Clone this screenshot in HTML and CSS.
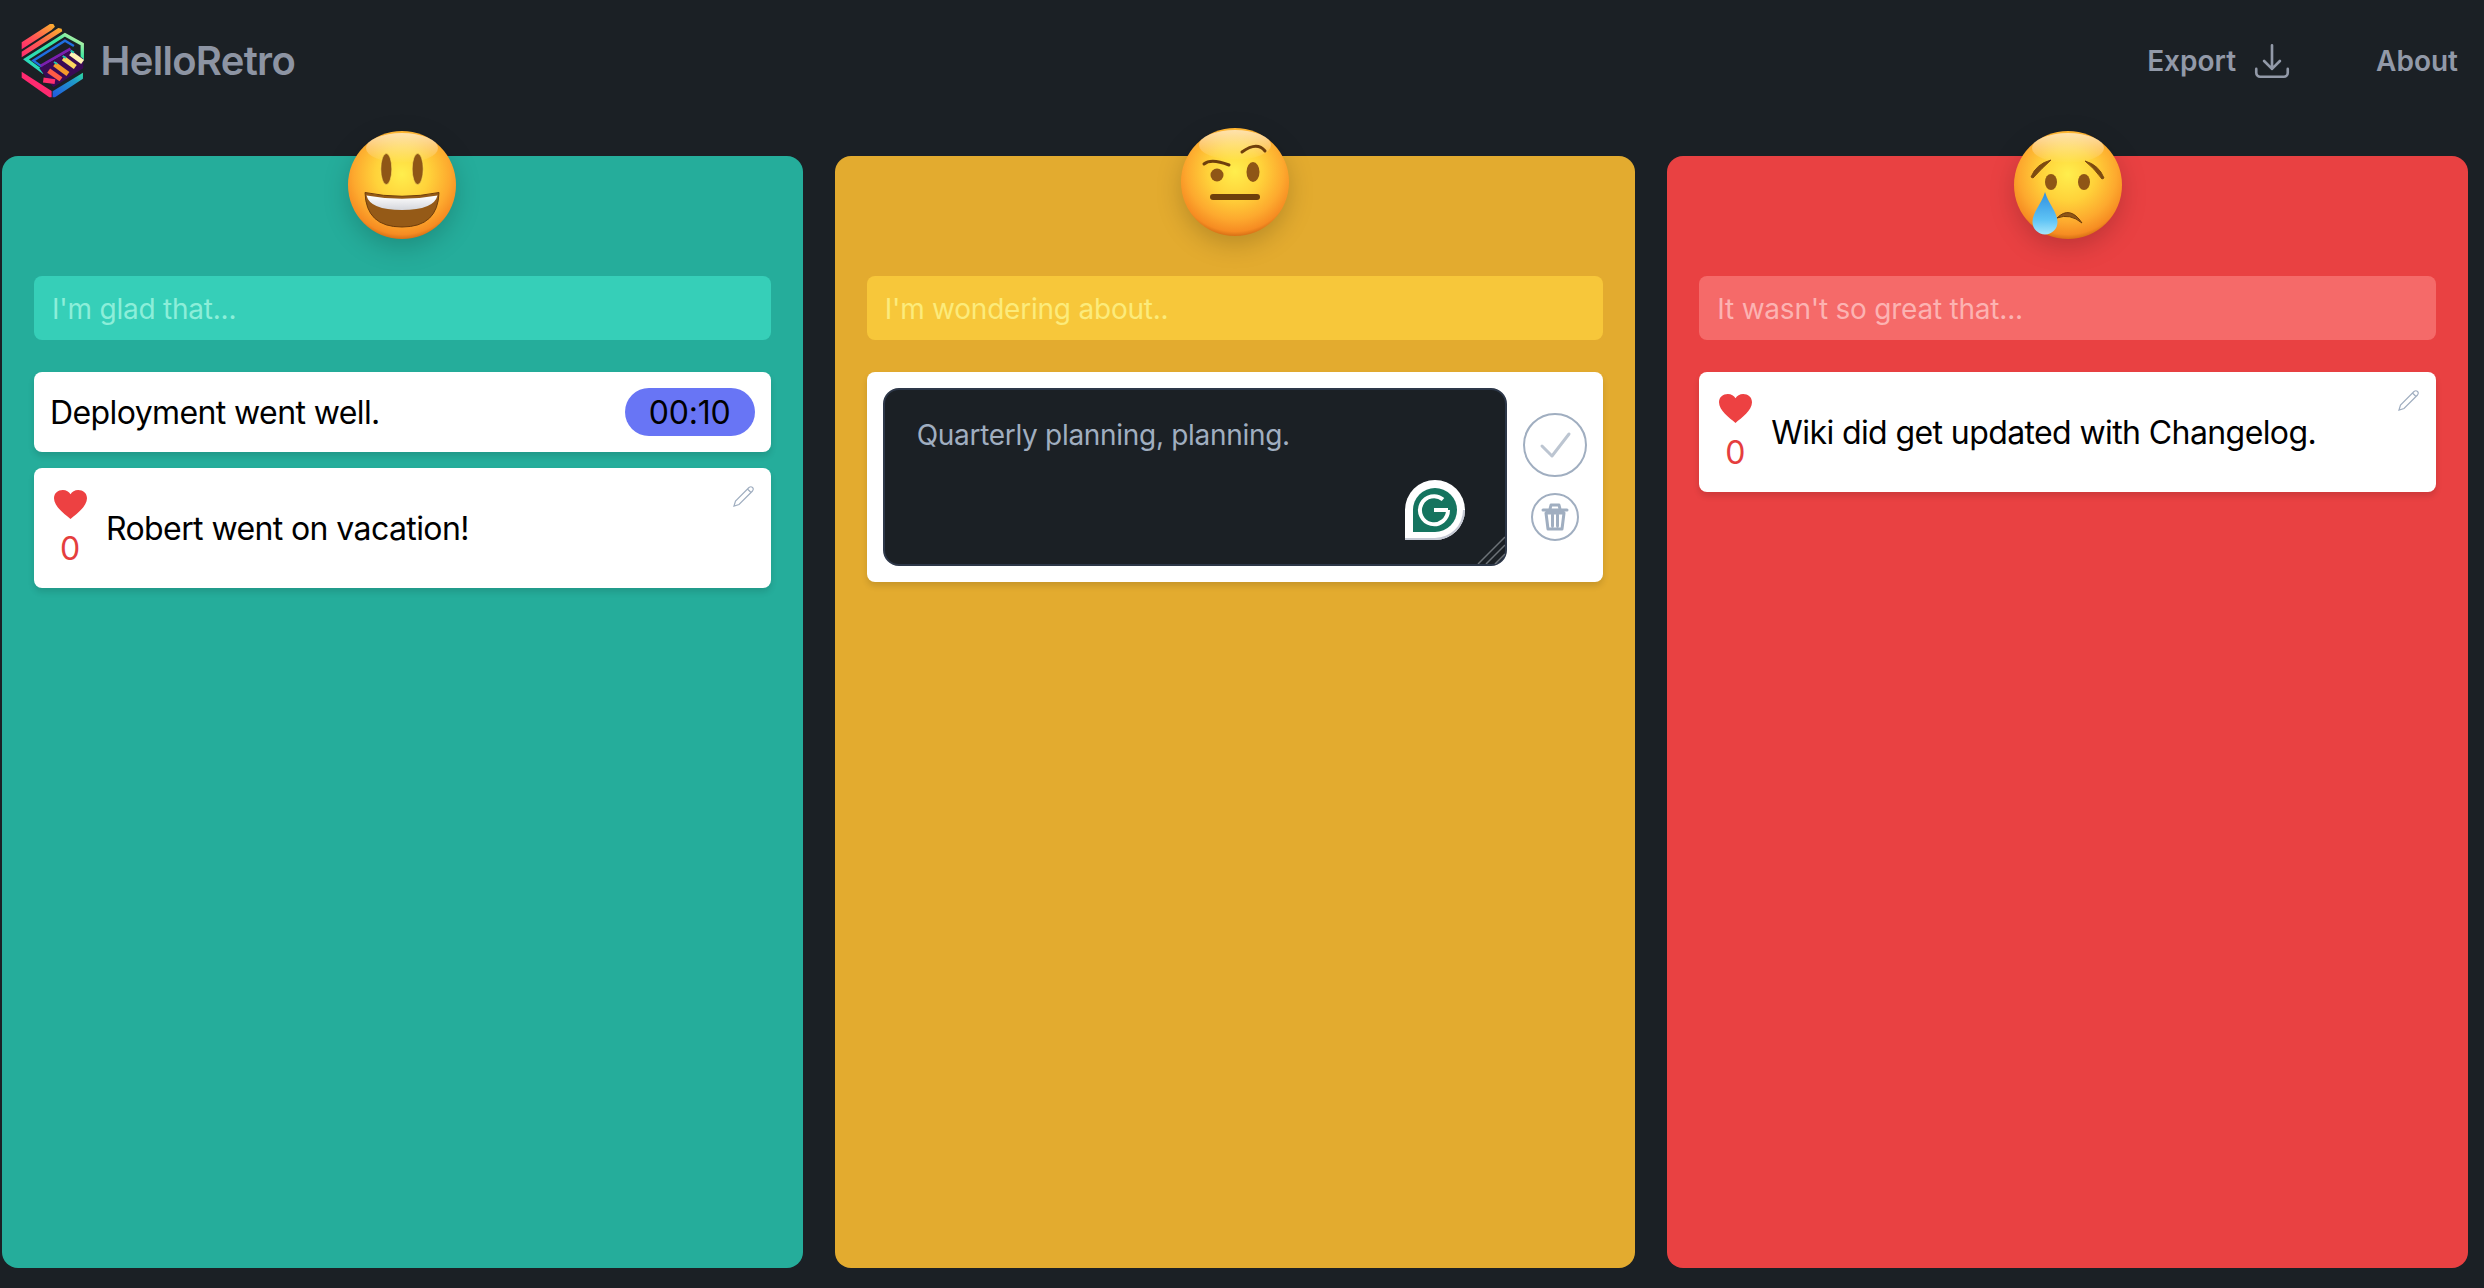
FILE: index.html
```html
<!DOCTYPE html>
<html lang="en">
<head>
<meta charset="utf-8">
<title>HelloRetro</title>
<link rel="stylesheet" href="styles.css">
</head>
<body>
<svg class="defs" width="0" height="0" aria-hidden="true">
  <defs>
    <radialGradient id="face" cx="50%" cy="40%" r="62%">
      <stop offset="0" stop-color="#ffee4d"/>
      <stop offset=".4" stop-color="#ffd23a"/>
      <stop offset=".72" stop-color="#fda92e"/>
      <stop offset=".9" stop-color="#f68c22"/>
      <stop offset="1" stop-color="#c9630f"/>
    </radialGradient>
    <linearGradient id="shine" x1="0" y1="0" x2="0" y2="1">
      <stop offset="0" stop-color="#fff" stop-opacity=".6"/>
      <stop offset="1" stop-color="#fff" stop-opacity="0"/>
    </linearGradient>
    <linearGradient id="tear" x1="0" y1="0" x2="0" y2="1">
      <stop offset="0" stop-color="#2f8fe0"/>
      <stop offset=".65" stop-color="#5ec3f5"/>
      <stop offset="1" stop-color="#a5e6fb"/>
    </linearGradient>
    <linearGradient id="teeth" x1="0" y1="0" x2="0" y2="1">
      <stop offset="0" stop-color="#fff"/>
      <stop offset="1" stop-color="#d4d6dc"/>
    </linearGradient>
    <linearGradient id="stripe" x1="1" y1="0" x2="0" y2="1">
      <stop offset="0" stop-color="#fbb32c"/>
      <stop offset=".55" stop-color="#ff5a52"/>
      <stop offset="1" stop-color="#ff2a70"/>
    </linearGradient>
    <linearGradient id="hexblue" x1="0" y1="1" x2="1" y2="0">
      <stop offset="0" stop-color="#2157e0"/>
      <stop offset=".7" stop-color="#1f9cc8"/>
      <stop offset="1" stop-color="#2fe0a0"/>
    </linearGradient>
    <linearGradient id="hexgreen" x1="0" y1="1" x2="1" y2="0">
      <stop offset="0" stop-color="#25d5c0"/>
      <stop offset=".7" stop-color="#38e8a0"/>
      <stop offset="1" stop-color="#e4f4a8"/>
    </linearGradient>
  </defs>
</svg>

<header class="topbar">
  <div class="brand">
    <svg class="logo" viewBox="60 60 200 240">
      <polygon points="65,127 150,72 160,72 165,80 155,90 65,148" fill="url(#stripe)"/>
      <polygon points="65,155 175,84 185,86 187,94 65,172" fill="url(#stripe)"/>
      <path d="M247 180V133L195 104L78 178L132 218" fill="none" stroke="url(#hexgreen)" stroke-width="10"/>
      <path d="M222 138L195 122L100 182L130 203" fill="none" stroke="#1f6fe0" stroke-width="7"/>
      <path d="M212 146L122 198" fill="none" stroke="#7a1fb0" stroke-width="9"/>
      <polygon points="118,205 215,150 250,176 250,205 160,262" fill="#3a0a55"/>
      <path d="M212 160L248 186" stroke="#fff4b4" stroke-width="15"/>
      <path d="M190 175L226 201" stroke="#fbd760" stroke-width="15"/>
      <path d="M164 193L204 222" stroke="#f59a2a" stroke-width="15"/>
      <path d="M146 212L183 238" stroke="#ff5a45" stroke-width="15"/>
      <path d="M130 240L165 245" stroke="#ff2f6e" stroke-width="15"/>
      <path d="M212 152l10 6M188 168l10 6M162 186l10 6" stroke="#1cc6b0" stroke-width="6"/>
      <polygon points="65,215 155,273 155,292 148,292 65,233" fill="#ff2a70"/>
      <polygon points="158,274 249,218 249,236 165,292 158,292" fill="url(#hexblue)"/>
    </svg>
    <span class="brand-name">HelloRetro</span>
  </div>
  <nav class="nav">
    <a class="nav-link export">Export
      <svg class="export-icon" viewBox="0 0 24 24"><path d="M3 16.5v2.25A2.25 2.25 0 0 0 5.25 21h13.5A2.25 2.25 0 0 0 21 18.75V16.5M16.5 12L12 16.5m0 0L7.5 12m4.5 4.5V3"/></svg>
    </a>
    <a class="nav-link">About</a>
  </nav>
</header>

<main class="board">
  <section class="column teal">
    <svg class="emoji" viewBox="-60 -60 120 120">
      <circle r="54" fill="url(#face)"/>
      <ellipse cx="0" cy="-37" rx="36" ry="15" fill="url(#shine)"/>
      <ellipse cx="-15.7" cy="-16" rx="5.5" ry="15.5" fill="#8f5616" stroke="#ffe25a" stroke-width=".6"/>
      <ellipse cx="15.7" cy="-16" rx="5.5" ry="15.5" fill="#8f5616" stroke="#ffe25a" stroke-width=".6"/>
      <path d="M-37 7.5Q0 15 37 7.5Q36 42 0 42Q-36 42-37 7.5Z" fill="#955a17" stroke="#6e3c0a" stroke-width="1"/>
      <path d="M-35.5 10.500Q0 17 35.5 10.500Q32 25 0 25Q-32 25-35.5 10.500Z" fill="url(#teeth)"/>
    </svg>
    <div class="prompt">I'm glad that...</div>
    <div class="cards">
      <article class="card timer-card">
        <span class="card-text">Deployment went well.</span>
        <span class="timer">00:10</span>
      </article>
      <article class="card note">
        <div class="vote">
          <svg class="heart" viewBox="0 0 32 28"><path d="M16 28C10 23 0 16 0 8C0 3 4 0 8.500 0C12 0 14.500 2 16 4C17.500 2 20 0 23.500 0C28 0 32 3 32 8C32 16 22 23 16 28Z"/></svg>
          <span class="vote-count">0</span>
        </div>
        <span class="card-text">Robert went on vacation!</span>
        <svg class="pencil" viewBox="0 0 21 21"><path d="M1 20L2.500 15L16 1.500Q18 0 19.500 1.500Q21 3 19.500 5L6 18.500ZM14.500 3L18 6.500"/></svg>
      </article>
    </div>
  </section>

  <section class="column amber">
    <svg class="emoji emoji-up" viewBox="-60 -60 120 120">
      <circle r="54" fill="url(#face)"/>
      <ellipse cx="0" cy="-37" rx="36" ry="15" fill="url(#shine)"/>
      <circle cx="-18" cy="-7" r="6.500" fill="#8f5616"/>
      <ellipse cx="18" cy="-10" rx="6.500" ry="10" fill="#8f5616"/>
      <rect x="-25" y="12" width="50" height="6" rx="3" fill="#6f3f0c"/>
      <path d="M-31-18Q-24-24-6-17" fill="none" stroke="#6f3f0c" stroke-width="3" stroke-linecap="round"/>
      <path d="M7-30Q22-41 30-31" fill="none" stroke="#6f3f0c" stroke-width="3" stroke-linecap="round"/>
    </svg>
    <div class="prompt">I'm wondering about..</div>
    <div class="cards">
      <article class="card editor">
        <div class="textarea">
          Quarterly planning, planning.
          <svg class="grammarly" viewBox="0 0 60 60">
            <path d="M0 60V30A30 30 0 1 1 30 60Z" fill="#fff"/>
            <path d="M30 60A30 30 0 0 0 60 30H58A28 28 0 0 1 30 58H0V60Z" fill="#c5c9d4"/>
            <path d="M8 52V30A22 22 0 1 1 30 52Z" fill="#15745f"/>
            <path d="M43 30H29M43 30A14 14 0 1 1 38 19.500" fill="none" stroke="#fff" stroke-width="4"/>
          </svg>
          <svg class="resizer" viewBox="0 0 28 28"><path d="M1 28L28 1M9 28L28 9M18 28L28 18"/></svg>
        </div>
        <div class="actions">
          <button class="round-btn confirm" type="button" aria-label="Save">
            <svg viewBox="0 0 60 60"><path d="M17 31L27 41L44 19"/></svg>
          </button>
          <button class="round-btn remove" type="button" aria-label="Delete">
            <svg viewBox="0 0 44 44"><path d="M10 15H34M17 14L18 10H26L27 14M13 18L15 34H29L31 18ZM19.500 20V31M24.500 20V31"/></svg>
          </button>
        </div>
      </article>
    </div>
  </section>

  <section class="column red">
    <svg class="emoji" viewBox="-60 -60 120 120">
      <circle r="54" fill="url(#face)"/>
      <ellipse cx="0" cy="-37" rx="36" ry="15" fill="url(#shine)"/>
      <ellipse cx="-17" cy="-3" rx="6" ry="8" fill="#8f5616"/>
      <ellipse cx="16" cy="-3" rx="6" ry="8" fill="#8f5616"/>
      <path d="M-37-8Q-32-21-17-25Q-26-17-35-7Z" fill="#7d4a10" stroke="#7d4a10" stroke-width="1" stroke-linejoin="round"/>
      <path d="M36-7Q31-20 17-24Q26-17 34-6Z" fill="#7d4a10" stroke="#7d4a10" stroke-width="1" stroke-linejoin="round"/>
      <path d="M-11 33Q2 20 14 38Q2 28-11 33Z" fill="#8f5616" stroke="#6e3c0a" stroke-width="1" stroke-linejoin="round"/>
      <path d="M-23 7C-20 18-10.500 27-10.500 37A12.500 12.500 0 0 1-35.500 37C-35.500 27-26 18-23 7Z" fill="url(#tear)"/>
    </svg>
    <div class="prompt">It wasn't so great that...</div>
    <div class="cards">
      <article class="card note">
        <div class="vote">
          <svg class="heart" viewBox="0 0 32 28"><path d="M16 28C10 23 0 16 0 8C0 3 4 0 8.500 0C12 0 14.500 2 16 4C17.500 2 20 0 23.500 0C28 0 32 3 32 8C32 16 22 23 16 28Z"/></svg>
          <span class="vote-count">0</span>
        </div>
        <span class="card-text">Wiki did get updated with Changelog.</span>
        <svg class="pencil" viewBox="0 0 21 21"><path d="M1 20L2.500 15L16 1.500Q18 0 19.500 1.500Q21 3 19.500 5L6 18.500ZM14.500 3L18 6.500"/></svg>
      </article>
    </div>
  </section>
</main>
</body>
</html>
```
FILE: styles.css
```css
* { box-sizing: border-box; }

html, body { height: 100%; }

body {
  margin: 0;
  background: #1b2025;
  font-family: Inter, "Noto Sans", sans-serif;
  display: flex;
  flex-direction: column;
  overflow: hidden;
}

.defs { position: absolute; }

.topbar {
  height: 120px;
  display: flex;
  align-items: center;
  justify-content: space-between;
  padding: 0 26px 0 20px;
  flex: none;
}

.brand { display: flex; align-items: center; gap: 14px; }
.logo { width: 66.6px; height: 80px; display: block; }
.brand-name { font-size: 40px; font-weight: 600; color: #8d94a3; letter-spacing: -0.7px; }

.nav { display: flex; align-items: center; gap: 83px; padding-top: 2px; }
.nav-link {
  font-size: 28px;
  font-weight: 600;
  color: #9299a8;
  display: flex;
  align-items: center;
  gap: 15px;
}
.export-icon {
  width: 42px;
  height: 42px;
  fill: none;
  stroke: #9299a8;
  stroke-width: 1.5;
  stroke-linecap: round;
  stroke-linejoin: round;
}

.board {
  flex: 1;
  display: flex;
  gap: 32px;
  padding: 36px 16px 20px 2px;
  min-height: 0;
}

.column {
  flex: 1 1 0;
  position: relative;
  padding: 120px 32px 32px;
  border-radius: 16px;
}
.teal { background: #25ad9b; }
.amber { background: #e3ab2f; }
.red { background: #e94142; }

.emoji {
  position: absolute;
  left: 50%;
  top: -31px;
  width: 120px;
  height: 120px;
  margin-left: -60px;
  filter: drop-shadow(0 8px 12px rgba(0, 0, 0, .18));
}
.emoji-up { top: -34px; }

.prompt {
  height: 64px;
  border-radius: 8px;
  padding: 2px 18px 0;
  display: flex;
  align-items: center;
  font-size: 28px;
  letter-spacing: -0.22px;
  margin-bottom: 32px;
}
.teal .prompt { background: #36cfb8; color: #8ceed9; }
.amber .prompt { background: #f7c73a; color: #fceb7b; }
.red .prompt { background: #f56a69; color: #fcb3b2; }

.cards { display: flex; flex-direction: column; gap: 16px; }

.card {
  position: relative;
  background: #fff;
  border-radius: 8px;
  padding: 16px;
  display: flex;
  align-items: center;
  box-shadow: 0 4px 6px rgba(0, 0, 0, .12);
}
.card-text { font-size: 32px; color: #000; letter-spacing: -0.6px; }

.timer-card { justify-content: space-between; height: 80px; }
.timer {
  width: 130px;
  height: 48px;
  border-radius: 24px;
  background: #6875f5;
  color: #000;
  font-size: 32px;
  letter-spacing: -0.2px;
  display: flex;
  align-items: center;
  justify-content: center;
}

.note { height: 120px; }
.vote {
  width: 40px;
  margin-right: 16px;
  display: flex;
  flex-direction: column;
  align-items: center;
  gap: 11px;
  padding-top: 1px;
}
.heart { width: 33px; height: 29px; fill: #ed4142; display: block; }
.vote-count { font-size: 32px; line-height: 38px; color: #e53e3e; }
.pencil {
  position: absolute;
  right: 17px;
  top: 18px;
  width: 21px;
  height: 21px;
  fill: none;
  stroke: #a0aec0;
  stroke-width: 1.2;
}

.editor { gap: 16px; height: 210px; }
.textarea {
  position: relative;
  flex: 1;
  height: 178px;
  padding: 25px 32px;
  background: #1b2025;
  border: 2px solid #2d3748;
  border-radius: 16px;
  color: #a0aec0;
  font-size: 28px;
  line-height: 40px;
  letter-spacing: -0.3px;
}
.grammarly {
  position: absolute;
  right: 40px;
  bottom: 24px;
  width: 60px;
  height: 60px;
}
.resizer {
  position: absolute;
  right: 0;
  bottom: 0;
  width: 28px;
  height: 28px;
  fill: none;
  stroke: #6d7278;
  stroke-width: 1.5;
}

.actions {
  width: 64px;
  display: flex;
  flex-direction: column;
  align-items: center;
  gap: 16px;
}
.round-btn {
  padding: 0;
  background: #fff;
  border: 2px solid #a0aec0;
  border-radius: 50%;
  display: flex;
  align-items: center;
  justify-content: center;
}
.round-btn svg { display: block; fill: none; }
.confirm { width: 64px; height: 64px; }
.confirm svg { width: 60px; height: 60px; stroke: #bcc5d1; stroke-width: 3; stroke-linecap: round; stroke-linejoin: round; }
.remove { width: 48px; height: 48px; }
.remove svg { width: 44px; height: 44px; stroke: #a0aec0; stroke-width: 3; stroke-linecap: round; stroke-linejoin: round; }
```
